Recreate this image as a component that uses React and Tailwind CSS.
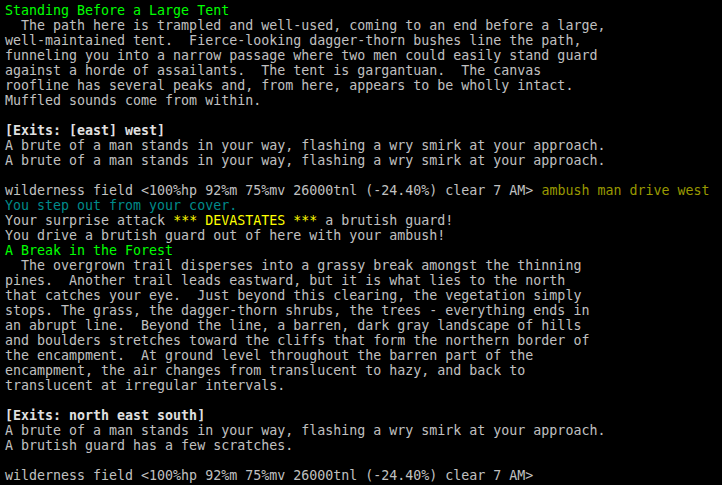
import React from "react";

const G = ({ children }) => <span className="text-[#00ff00]">{children}</span>;
const B = ({ children }) => <span className="font-bold text-[#e0e0e0]">{children}</span>;
const T = ({ children }) => <span className="text-[#008b8b]">{children}</span>;
const Y = ({ children }) => <span className="text-[#ffff00]">{children}</span>;
const O = ({ children }) => <span className="text-[#999900]">{children}</span>;

export default function App() {
  return (
    <div className="w-[722px] h-[485px] bg-black overflow-hidden">
      <pre className="pt-[3px] pl-[5px] m-0 whitespace-pre text-[13.3px] leading-[15px] text-[#c0c0c0] font-['DejaVu_Sans_Mono',monospace]">
<G>Standing Before a Large Tent</G>{"\n"}
{"  The path here is trampled and well-used, coming to an end before a large,\n"}
{"well-maintained tent.  Fierce-looking dagger-thorn bushes line the path,\n"}
{"funneling you into a narrow passage where two men could easily stand guard\n"}
{"against a horde of assailants.  The tent is gargantuan.  The canvas\n"}
{"roofline has several peaks and, from here, appears to be wholly intact.\n"}
{"Muffled sounds come from within.\n"}
{"\n"}
<B>[Exits: [east] west]</B>{"\n"}
{"A brute of a man stands in your way, flashing a wry smirk at your approach.\n"}
{"A brute of a man stands in your way, flashing a wry smirk at your approach.\n"}
{"\n"}
{"wilderness field <100%hp 92%m 75%mv 26000tnl (-24.40%) clear 7 AM> "}<O>ambush man drive west</O>{"\n"}
<T>You step out from your cover.</T>{"\n"}
{"Your surprise attack "}<Y>*** DEVASTATES ***</Y>{" a brutish guard!\n"}
{"You drive a brutish guard out of here with your ambush!\n"}
<G>A Break in the Forest</G>{"\n"}
{"  The overgrown trail disperses into a grassy break amongst the thinning\n"}
{"pines.  Another trail leads eastward, but it is what lies to the north\n"}
{"that catches your eye.  Just beyond this clearing, the vegetation simply\n"}
{"stops. The grass, the dagger-thorn shrubs, the trees - everything ends in\n"}
{"an abrupt line.  Beyond the line, a barren, dark gray landscape of hills\n"}
{"and boulders stretches toward the cliffs that form the northern border of\n"}
{"the encampment.  At ground level throughout the barren part of the\n"}
{"encampment, the air changes from translucent to hazy, and back to\n"}
{"translucent at irregular intervals.\n"}
{"\n"}
<B>[Exits: north east south]</B>{"\n"}
{"A brute of a man stands in your way, flashing a wry smirk at your approach.\n"}
{"A brutish guard has a few scratches.\n"}
{"\n"}
{"wilderness field <100%hp 92%m 75%mv 26000tnl (-24.40%) clear 7 AM>"}
      </pre>
    </div>
  );
}
